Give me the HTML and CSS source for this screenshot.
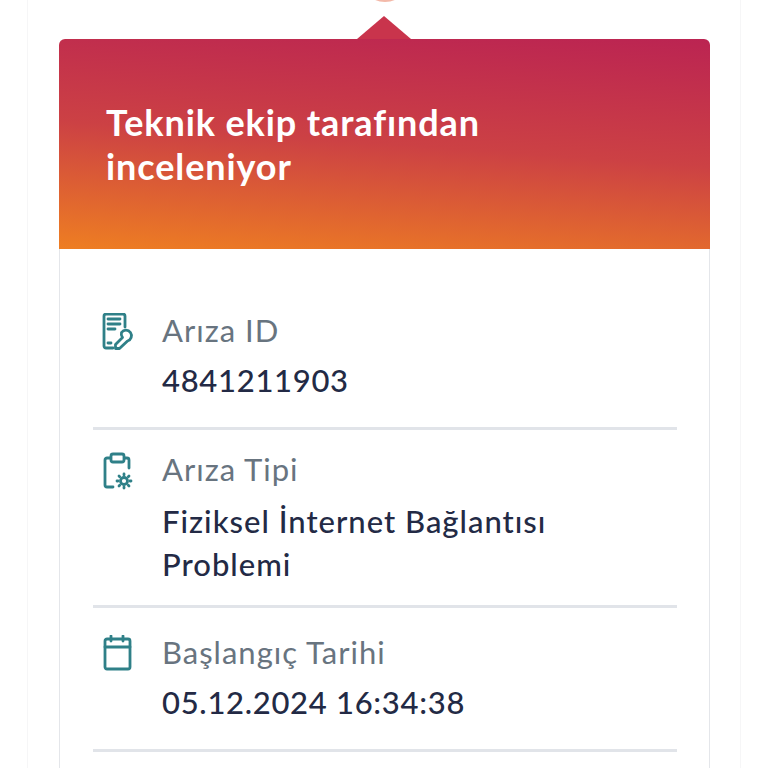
FILE: index.html
```html
<!DOCTYPE html>
<html>
<head>
    <title>Arıza Takip</title>
    <link rel="stylesheet" href="styles.css">
</head>
<body>
    <div class="panel">
        <div class="step-dot"></div>
        <div class="status-card">
            <div class="status-head">
                <h2>Teknik ekip tarafından inceleniyor</h2>
            </div>
            <div class="status-body">
                <div class="info-row">
                    <svg class="info-icon" viewBox="0 0 36 40" fill="none" stroke="#2f8088" stroke-width="2.800" stroke-linecap="round" stroke-linejoin="round">
                        <path d="M13 35H6a2 2 0 0 1-2-2V3a2 2 0 0 1 2-2h17a2 2 0 0 1 2 2v11"/>
                        <path d="M8 6h12M8 11h12M8 16h7M8 30h3"/>
                        <path d="M21.500 19.500a5.500 5.500 0 1 1 6 8.500l-8 7.500h-4v-4l7-7a5.500 5.500 0 0 1-1-5z"/>
                    </svg>
                    <div class="info-text">
                        <div class="info-label">Arıza ID</div>
                        <div class="info-value">4841211903</div>
                    </div>
                </div>
                <div class="info-row tight">
                    <svg class="info-icon" viewBox="0 0 36 40" fill="none" stroke="#2f8088" stroke-width="2.800" stroke-linecap="round" stroke-linejoin="round">
                        <path d="M10 6H7a2 2 0 0 0-2 2v25a2 2 0 0 0 2 2h6"/>
                        <path d="M25 6h2a2 2 0 0 1 2 2v8"/>
                        <rect x="11" y="2" width="13" height="8" rx="2"/>
                        <circle cx="24" cy="29" r="3.500"/>
                        <path d="M24 22v1M24 35v1M17 29h1M30 29h1M19 24l.7.7M28.300 33.300l.7.7M19 34l.7-.7M28.300 24.700l.7-.7"/>
                    </svg>
                    <div class="info-text">
                        <div class="info-label">Arıza Tipi</div>
                        <div class="info-value">Fiziksel İnternet Bağlantısı Problemi</div>
                    </div>
                </div>
                <div class="info-row">
                    <svg class="info-icon" viewBox="0 0 36 40" fill="none" stroke="#2f8088" stroke-width="2.800" stroke-linecap="round" stroke-linejoin="round">
                        <rect x="5" y="4" width="25" height="30" rx="2"/>
                        <path d="M5 12h25M11 1v5M23 1v5"/>
                    </svg>
                    <div class="info-text">
                        <div class="info-label">Başlangıç Tarihi</div>
                        <div class="info-value">05.12.2024 16:34:38</div>
                    </div>
                </div>
            </div>
        </div>
    </div>
</body>
</html>
```

FILE: styles.css
```css
html, body {
    margin: 0;
    height: 768px;
    overflow: hidden;
    background: #fff;
    font-family: "Lato", "Noto Sans", sans-serif;
}
.panel {
    box-sizing: border-box;
    margin: 0 27px;
    height: 768px;
    padding: 39px 30px 0 31px;
    border-left: 1px solid #f6f6f7;
    border-right: 1px solid #f6f6f7;
    position: relative;
}
.step-dot {
    position: absolute;
    top: -20px;
    left: 340px;
    width: 34px;
    height: 22px;
    border-radius: 50%;
    background: #f3b9a9;
}
.status-card {
    position: relative;
}
.status-card::before {
    content: "";
    position: absolute;
    top: -23px;
    left: 298px;
    width: 54px;
    height: 23px;
    background: #c9344c;
    clip-path: polygon(50% 0, 100% 100%, 0 100%);
}
.status-head {
    height: 210px;
    box-sizing: border-box;
    padding: 61px 47px 0;
    border-radius: 6px 6px 0 0;
    background: linear-gradient(184deg, #bb2452 0%, #cc4144 50%, #ee7e22 100%);
}
.status-head h2 {
    margin: 0;
    width: 420px;
    color: #fff;
    font-size: 36px;
    font-weight: 700;
    letter-spacing: 0.9px;
    line-height: 44px;
}
.status-body {
    box-sizing: border-box;
    height: 519px;
    padding: 37px 32px 0 33px;
    border-left: 1px solid #e4e6ea;
    border-right: 1px solid #e4e6ea;
}
.info-row {
    display: flex;
    gap: 26px;
    padding: 24px 0 25px 7px;
    border-bottom: 3px solid #e1e4e9;
}
.info-row.tight {
    padding: 19px 0 19px 7px;
}
.info-icon {
    flex: none;
    width: 36px;
    height: 40px;
    margin-top: 3px;
}
.info-label {
    color: #68747f;
    font-size: 31px;
    letter-spacing: 1px;
    line-height: 40px;
}
.info-value {
    margin-top: 9px;
    color: #232a45;
    font-size: 31px;
    font-weight: 500;
    letter-spacing: 0.7px;
    line-height: 43px;
    max-width: 420px;
}
.tight .info-value {
    margin-top: 11px;
    letter-spacing: 1px;
}
```
